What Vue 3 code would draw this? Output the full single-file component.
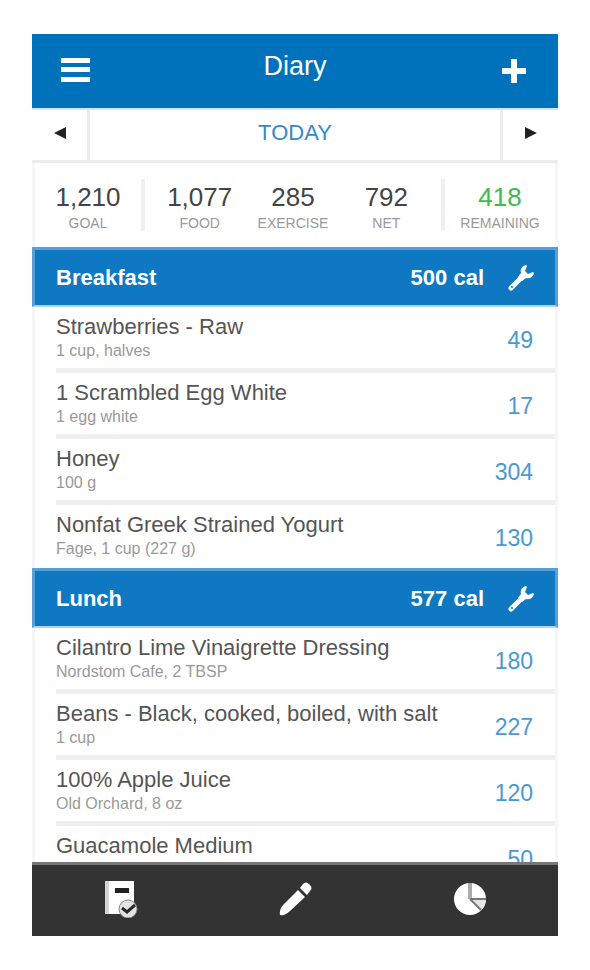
<script setup>
const totals = [
  { value: '1,077', label: 'FOOD' },
  { value: '285', label: 'EXERCISE' },
  { value: '792', label: 'NET' },
]

const meals = [
  {
    name: 'Breakfast',
    total: 500,
    foods: [
      { name: 'Strawberries - Raw', serving: '1 cup, halves', cal: 49 },
      { name: '1 Scrambled Egg White', serving: '1 egg white', cal: 17 },
      { name: 'Honey', serving: '100 g', cal: 304 },
      { name: 'Nonfat Greek Strained Yogurt', serving: 'Fage, 1 cup (227 g)', cal: 130 },
    ],
  },
  {
    name: 'Lunch',
    total: 577,
    foods: [
      { name: 'Cilantro Lime Vinaigrette Dressing', serving: 'Nordstom Cafe, 2 TBSP', cal: 180 },
      { name: 'Beans - Black, cooked, boiled, with salt', serving: '1 cup', cal: 227 },
      { name: '100% Apple Juice', serving: 'Old Orchard, 8 oz', cal: 120 },
      { name: 'Guacamole Medium', serving: '', cal: 50 },
    ],
  },
]
</script>

<template>
  <div class="page">
    <div class="app">
      <header class="topbar">
        <button aria-label="Menu">
          <svg width="30" height="26" viewBox="0 0 30 26"><path d="M0 0h29v5H0zM0 9h29v5H0zM0 19h29v5H0z" fill="#fff" /></svg>
        </button>
        <h1>Diary</h1>
        <button aria-label="Add">
          <svg width="24" height="24" viewBox="0 0 24 24"><path d="M9 0h6v9h9v6h-9v9H9v-9H0V9h9z" fill="#fff" /></svg>
        </button>
      </header>

      <nav class="days">
        <button aria-label="Previous day">
          <svg width="12" height="12" viewBox="0 0 12 12"><path d="M0 6 12 0v12z" fill="#222" /></svg>
        </button>
        <button class="today">TODAY</button>
        <button aria-label="Next day">
          <svg width="12" height="12" viewBox="0 0 12 12"><path d="M12 6 0 0v12z" fill="#222" /></svg>
        </button>
      </nav>

      <main class="content">
        <section class="summary">
          <div class="stat side"><strong>1,210</strong><span>GOAL</span></div>
          <div class="middle">
            <div v-for="t in totals" :key="t.label" class="stat">
              <strong>{{ t.value }}</strong><span>{{ t.label }}</span>
            </div>
          </div>
          <div class="stat side left"><strong>418</strong><span>REMAINING</span></div>
        </section>

        <section v-for="meal in meals" :key="meal.name">
          <header class="meal-head">
            <h2>{{ meal.name }}</h2>
            <span>{{ meal.total }} cal</span>
            <button :aria-label="meal.name + ' tools'">
              <svg width="26" height="26" viewBox="0 0 26 26">
                <path d="M3 23 14 12" stroke="#fff" stroke-width="5" stroke-linecap="round" />
                <path d="M18 0c-4 1-6 4-5 8l-3 4 4 4 4-3c4 1 7-1 8-5l-1-1-5 2-3-3 2-5z" fill="#fff" />
                <circle cx="4" cy="22" r="1" fill="#0e79c2" />
              </svg>
            </button>
          </header>
          <ul>
            <li v-for="food in meal.foods" :key="food.name">
              <div>
                <h3>{{ food.name }}</h3>
                <p>{{ food.serving }}</p>
              </div>
              <span class="cal">{{ food.cal }}</span>
            </li>
          </ul>
        </section>
      </main>

      <footer class="tabs">
        <button aria-label="Diary">
          <svg width="36" height="38" viewBox="0 0 36 38">
            <path d="M3 1h5v33H3z" fill="#d4d4d4" />
            <path d="M7 1h25v33H7z" fill="#fff" />
            <path d="M13 8h14v5H13z" fill="#222" />
            <circle cx="26" cy="29" r="9" fill="#e4e4e4" stroke="#888" stroke-width="1" />
            <path d="m20 28 5 4 8-7" fill="none" stroke="#2a2a2a" stroke-width="3" />
          </svg>
        </button>
        <button aria-label="Edit">
          <svg width="34" height="36" viewBox="0 0 34 36">
            <path d="M2 34q-1-5 3-10L20 9l7 7-15 14q-5 5-10 4z" fill="#fff" />
            <path d="m22 7 3-4q3-3 6 0l1 1q3 3 0 6l-3 4z" fill="#fff" />
          </svg>
        </button>
        <button aria-label="Reports">
          <svg width="34" height="34" viewBox="0 0 34 34">
            <circle cx="17" cy="17" r="16" fill="#fff" />
            <path d="M17 17h16q0 7-5 11z" fill="#e6e6e6" />
            <path d="M17 1v16" stroke="#aaa" stroke-width="4" />
            <path d="M17 17h16M17 17l11 11" fill="none" stroke="#777" stroke-width="2" />
          </svg>
        </button>
      </footer>
    </div>
  </div>
</template>

<style>
body {
  margin: 0;
  background: #fff;
}
</style>

<style scoped>
* {
  box-sizing: border-box;
}
.page {
  height: 100vh;
  padding: 34px 32px;
  font-family: "Liberation Sans", Arial, sans-serif;
}
.app {
  display: flex;
  flex-direction: column;
  height: 100%;
  background: #fff;
}
h1, h2, h3, p, ul {
  margin: 0;
  padding: 0;
  font-weight: 400;
}
ul {
  list-style: none;
}
button {
  display: flex;
  align-items: center;
  justify-content: center;
  padding: 0;
  border: 0;
  background: none;
  font: inherit;
  cursor: pointer;
}
svg {
  display: block;
}
.topbar {
  flex: none;
  display: grid;
  grid-template-columns: 88px 1fr 88px;
  height: 74px;
  background: #0072bc;
  color: #fff;
}
.topbar h1 {
  font-size: 27px;
  line-height: 64px;
  text-align: center;
}
.days {
  flex: none;
  display: grid;
  grid-template-columns: 55px 1fr 55px;
  height: 55px;
  border-top: 2px solid #cfe6f6;
  border-bottom: 3px solid #ececec;
}
.days button {
  padding-bottom: 4px;
}
.days .today {
  border: solid #ececec;
  border-width: 0 3px;
  color: #3489cb;
  font-size: 22px;
}
.content {
  flex: 1;
  min-height: 0;
  overflow: hidden;
}
.summary,
ul {
  border: solid #f6f6f6;
  border-width: 0 3px;
}
.summary {
  display: flex;
  height: 84px;
  padding: 16px 0;
}
.stat {
  flex: 1;
  display: flex;
  flex-direction: column;
  align-items: center;
}
.stat strong {
  color: #444;
  font-size: 26px;
  font-weight: 400;
  line-height: 36px;
}
.stat span {
  color: #999;
  font-size: 14px;
  line-height: 16px;
}
.stat.side {
  flex: 0 0 110px;
  border-right: 4px solid #f0f0f0;
}
.stat.side.left {
  flex-basis: 114px;
  border-right: 0;
  border-left: 4px solid #f0f0f0;
}
.left strong {
  color: #3fb950;
}
.middle {
  flex: 1;
  display: flex;
  padding: 0 8px;
}
.meal-head {
  display: flex;
  align-items: center;
  height: 60px;
  padding: 0 21px;
  border: 3px solid #5a9fd3;
  border-bottom: 2px solid #b4d3eb;
  background: #0e79c2;
  color: #fff;
  font-size: 22px;
  font-weight: 700;
}
.meal-head h2 {
  flex: 1;
  font-size: 22px;
  font-weight: 700;
}
.meal-head button {
  margin-left: 24px;
}
li {
  display: flex;
  align-items: center;
  justify-content: space-between;
  height: 66px;
  margin-left: 21px;
  padding-right: 22px;
  border-bottom: 5px solid #efefef;
}
li:last-child {
  height: 63px;
  border-bottom: 2px solid #fff;
}
h3 {
  color: #555;
  font-size: 22px;
  line-height: 26px;
}
p {
  min-height: 22px;
  color: #999;
  font-size: 16px;
  line-height: 22px;
}
.cal {
  padding-top: 6px;
  color: #4799d3;
  font-size: 23px;
}
.tabs {
  flex: none;
  display: grid;
  grid-template-columns: repeat(3, 1fr);
  height: 74px;
  padding-bottom: 4px;
  border-top: 3px solid #777;
  background: #333;
}
</style>
